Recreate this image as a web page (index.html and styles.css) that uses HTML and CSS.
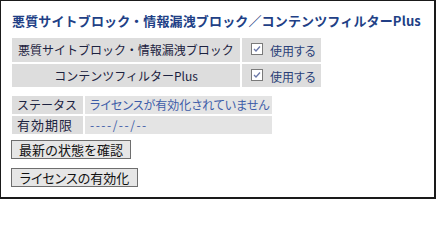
FILE: index.html
```html
<!DOCTYPE html>
<html lang="ja">
<head>
<meta charset="utf-8">
<link rel="stylesheet" href="styles.css">
</head>
<body>
<div class="frame">
  <h1 class="title">悪質サイトブロック・情報漏洩ブロック／コンテンツフィルターPlus</h1>
  <table class="opts">
    <tr>
      <th class="opt-name">悪質サイトブロック・情報漏洩ブロック</th>
      <td class="opt-val"><span class="chk"><svg width="12" height="12" viewBox="0 0 12 12"><rect x="0.5" y="0.5" width="11" height="11" fill="#fff" stroke="#7a7a7a"/><path d="M3 6 L5 8 L9 3.5" fill="none" stroke="#6b78a8" stroke-width="1.3"/></svg></span><span class="use">使用する</span></td>
    </tr>
    <tr>
      <th class="opt-name">コンテンツフィルターPlus</th>
      <td class="opt-val"><span class="chk"><svg width="12" height="12" viewBox="0 0 12 12"><rect x="0.5" y="0.5" width="11" height="11" fill="#fff" stroke="#7a7a7a"/><path d="M3 6 L5 8 L9 3.5" fill="none" stroke="#6b78a8" stroke-width="1.3"/></svg></span><span class="use">使用する</span></td>
    </tr>
  </table>
  <table class="lic">
    <tr>
      <th class="lic-name">ステータス</th>
      <td class="lic-val">ライセンスが有効化されていません</td>
    </tr>
    <tr>
      <th class="lic-name lic-name-wide">有効期限</th>
      <td class="lic-val lic-date">----/--/--</td>
    </tr>
  </table>
  <div class="buttons">
    <button class="btn btn-check" type="button">最新の状態を確認</button>
    <button class="btn btn-activate" type="button">ライセンスの有効化</button>
  </div>
</div>
</body>
</html>
```
FILE: styles.css
```css
html, body {
  margin: 0;
  padding: 0;
  background: #fff;
}
.frame {
  box-sizing: border-box;
  width: 436px;
  height: 199px;
  border-top: 1px solid #1a1a1a;
  border-left: 1px solid #1a1a1a;
  border-right: 2px solid #1a1a1a;
  border-bottom: 2px solid #1a1a1a;
  padding: 11px 0 0 9px;
  font-family: "Noto Sans CJK JP", "Noto Sans", sans-serif;
}
.title {
  margin: 0 0 0 2px;
  font-size: 13px;
  line-height: 18px;
  font-weight: bold;
  color: #213f86;
  white-space: nowrap;
  letter-spacing: 0.15px;
}
.opts, .lic {
  border-collapse: separate;
  border-spacing: 2px;
}
.opts {
  margin-top: 6px;
}
.opts th, .opts td {
  height: 22px;
  padding: 0;
  background: #dddddd;
  font-size: 12px;
  line-height: 22px;
  font-weight: normal;
  white-space: nowrap;
}
.opt-name {
  width: 228px;
  text-align: center;
  color: #1c2240;
}
.opt-val {
  width: 70px;
  padding-left: 9px !important;
  color: #2a3f78;
  font-feature-settings: "palt";
}
.chk {
  display: inline-block;
  vertical-align: middle;
  width: 12px;
  height: 12px;
  margin-top: -3px;
  margin-right: 7px;
  line-height: 0;
}
.use {
  vertical-align: middle;
}
.lic {
  margin-top: 5px;
}
.lic th, .lic td {
  height: 18px;
  padding: 0;
  font-size: 12px;
  line-height: 18px;
  font-weight: normal;
  white-space: nowrap;
}
.lic-name {
  width: 66px;
  padding-left: 5px !important;
  background: #dddddd;
  color: #1c2240;
  text-align: left;
}
.lic-name-wide {
  font-size: 13px !important;
  letter-spacing: 1px;
}
.lic-val {
  width: 182px;
  padding-left: 5px !important;
  background: #e4e4e4;
  color: #3d5ca8;
  text-align: left;
  font-feature-settings: "palt";
}
.lic-date {
  letter-spacing: 1.5px;
}
.buttons {
  display: flex;
  flex-direction: column;
  align-items: flex-start;
  gap: 9px;
  margin-top: 4px;
  margin-left: 1px;
}
.btn {
  box-sizing: border-box;
  height: 19px;
  margin: 0;
  padding: 0 4px;
  border: 1px solid #6e6e6e;
  background: #e6e6e6;
  font-family: "Noto Sans CJK JP", "Noto Sans", sans-serif;
  font-size: 13px;
  line-height: 17px;
  color: #111;
  white-space: nowrap;
}
.btn-check {
  width: 120px;
}
.btn-activate {
  width: 127px;
  font-feature-settings: "palt";
}
```
